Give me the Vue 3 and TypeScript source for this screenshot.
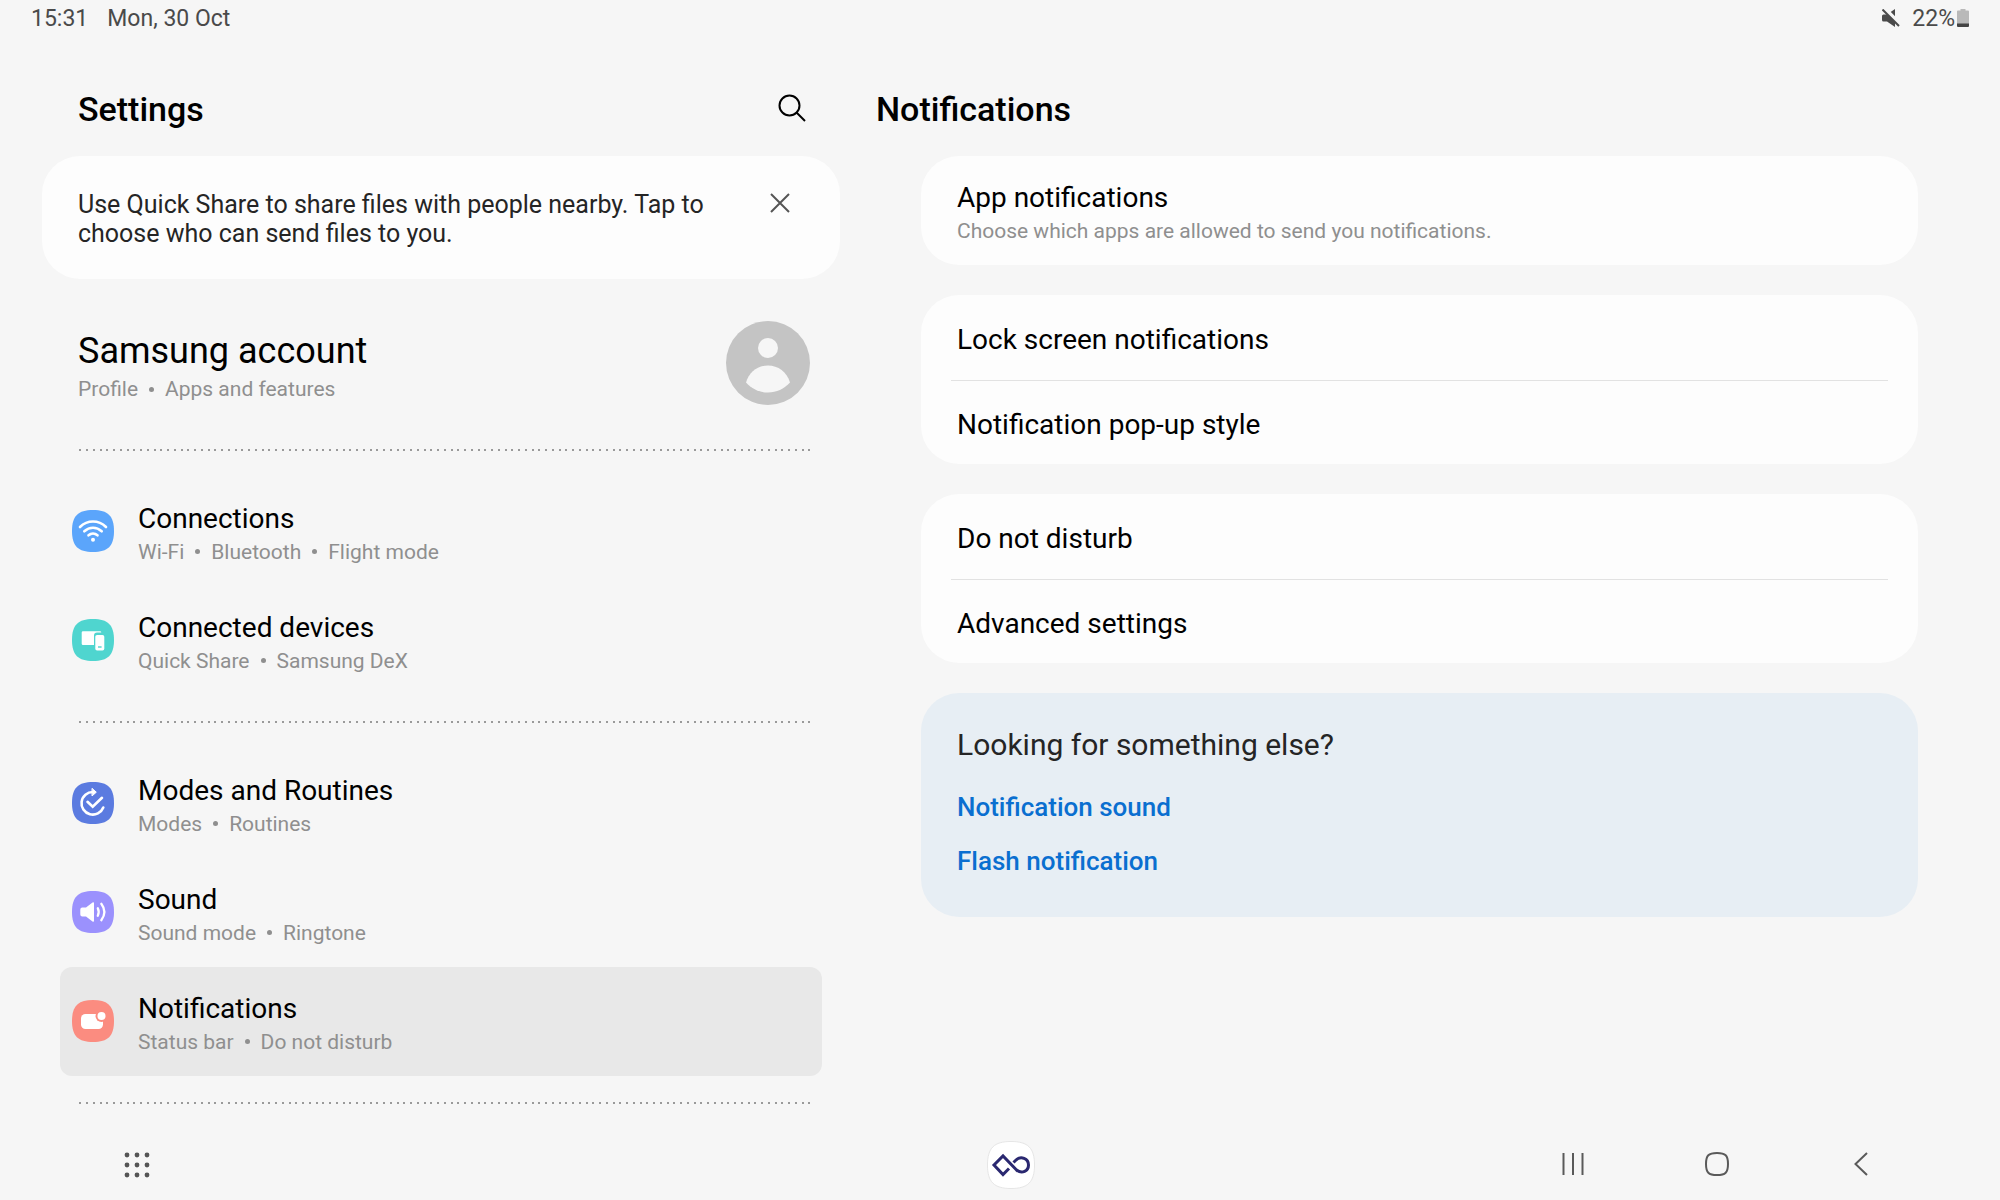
<script setup lang="ts">
interface SettingsItem {
  id: string
  title: string
  parts: string[]
  color: string
}

const groups: SettingsItem[][] = [
  [
    { id: 'connections', title: 'Connections', parts: ['Wi-Fi', 'Bluetooth', 'Flight mode'], color: '#5ba5fb' },
    { id: 'devices', title: 'Connected devices', parts: ['Quick Share', 'Samsung DeX'], color: '#4fd5cf' },
  ],
  [
    { id: 'modes', title: 'Modes and Routines', parts: ['Modes', 'Routines'], color: '#5b7be0' },
    { id: 'sound', title: 'Sound', parts: ['Sound mode', 'Ringtone'], color: '#9b91fd' },
    { id: 'notifications', title: 'Notifications', parts: ['Status bar', 'Do not disturb'], color: '#fb8c80' },
  ],
]

const selected = 'notifications'

const cards: string[][] = [
  ['Lock screen notifications', 'Notification pop-up style'],
  ['Do not disturb', 'Advanced settings'],
]
</script>

<template>
  <div class="screen">
    <header class="status">
      <span>15:31</span>
      <span class="date">Mon, 30 Oct</span>
      <svg class="mute" width="18" height="18" viewBox="0 0 18 18">
        <path d="M0 7q0-1.500 1.500-1.500H5L13 0V18L5 12.500H1.500Q0 12.500 0 11z" fill="#4a4a4a" />
        <path d="M2 -1L18 15" stroke="#f6f6f6" stroke-width="4" />
        <path d="M.5 .5L17 17" stroke="#4a4a4a" stroke-width="2" />
      </svg>
      <span>22%</span>
      <svg class="battery" width="12" height="18" viewBox="0 0 12 18">
        <path d="M3.500 0h5v1.500H11q1 0 1 1V15H0V2.500q0-1 1-1h2.500z" fill="#b9b9b9" />
        <path d="M0 14.500h12V17q0 1-1 1H1q-1 0-1-1z" fill="#444" />
      </svg>
    </header>

    <main class="panes">
      <section class="left">
        <div class="bar">
          <h1>Settings</h1>
          <button class="icon-btn" aria-label="Search">
            <svg width="28" height="28" viewBox="0 0 28 28" fill="none" stroke="#000" stroke-width="2">
              <circle cx="11.500" cy="11.500" r="10" />
              <path d="M18.500 18.500L27 27" />
            </svg>
          </button>
        </div>

        <div class="tip">
          <p>Use Quick Share to share files with people nearby. Tap to choose who can send files to you.</p>
          <button class="icon-btn" aria-label="Dismiss">
            <svg width="20" height="20" viewBox="0 0 20 20" fill="none" stroke="#555" stroke-width="2">
              <path d="M1 1L19 19M19 1L1 19" />
            </svg>
          </button>
        </div>

        <button class="account">
          <span class="text">
            <span class="account-title">Samsung account</span>
            <span class="sub"><span>Profile</span><i /><span>Apps and features</span></span>
          </span>
          <svg width="84" height="84" viewBox="0 0 84 84">
            <circle cx="42" cy="42" r="42" fill="#c4c4c4" />
            <circle cx="42" cy="27" r="10" fill="#f6f6f6" />
            <path d="M20 61.500C23 51 32 44.500 42 44.500S61 51 64 61.500C58 68 50.500 71.500 42 71.500S26 68 20 61.500z" fill="#f6f6f6" />
          </svg>
        </button>

        <template v-for="(group, g) in groups" :key="g">
          <svg class="dots" height="2"><line x1="0" y1="1" x2="100%" y2="1" stroke="#9a9a9a" stroke-width="2" stroke-dasharray="2 5 2 5 2 5 2 4" /></svg>
          <nav class="group">
            <button v-for="item in group" :key="item.id" class="row" :class="{ active: item.id === selected }">
              <svg width="42" height="42" viewBox="0 0 42 42" fill="none">
                <path d="M21 0C36 0 42 6 42 21S36 42 21 42 0 36 0 21 6 0 21 0z" :fill="item.color" />
                <g v-if="item.id === 'connections'" stroke="#fff" stroke-width="2.600" stroke-linecap="round">
                  <path d="M8 17C15.500 9.700 26.500 9.700 34 17" />
                  <path d="M12.300 21.300C17.500 16.500 24.500 16.500 29.700 21.300" />
                  <path d="M16.500 25.300C19.200 22.900 22.800 22.900 25.500 25.300" />
                  <circle cx="21" cy="29.800" r="2" fill="#fff" stroke="none" />
                </g>
                <g v-else-if="item.id === 'devices'" fill="#fff">
                  <path d="M11 12.300h17q1.300 0 1.300 1.300H25q-3 0-3 3V26H11q-1.300 0-1.300-1.300V13.600q0-1.300 1.300-1.300z" />
                  <rect x="23.300" y="16" width="9" height="15.500" rx="1.800" />
                  <rect x="26" y="27.300" width="3.600" height="1.400" :fill="item.color" />
                </g>
                <g v-else-if="item.id === 'modes'" stroke="#fff" stroke-width="2.600" stroke-linecap="round">
                  <path d="M21 10A11.300 11.300 0 1 0 31.300 25.500" />
                  <path d="M15.500 19.800L20.700 24.800L30 15.800" />
                  <path d="M20.300 6.600L24.300 10.200L20.300 13.700z" fill="#fff" stroke-width="1" />
                </g>
                <g v-else-if="item.id === 'sound'">
                  <path d="M8.300 18.500q0-2 2-2H14L20.500 11.500q1.500-1 1.500.8V29.700q0 1.800-1.500.8L14 25.500H10.300q-2 0-2-2z" fill="#fff" />
                  <path d="M25.800 17.300Q27.600 21 25.800 24.700M29.300 12.800Q35.500 21 29.300 29.200" stroke="#fff" stroke-width="2.300" stroke-linecap="round" />
                </g>
                <g v-else fill="#fff">
                  <rect x="9" y="14" width="22" height="15" rx="4.500" />
                  <circle cx="29.500" cy="16" r="6" :fill="item.color" />
                  <circle cx="29.500" cy="16" r="4" />
                </g>
              </svg>
              <span class="text">
                <span class="title">{{ item.title }}</span>
                <span class="sub">
                  <template v-for="(part, p) in item.parts" :key="part"><i v-if="p" /><span>{{ part }}</span></template>
                </span>
              </span>
            </button>
          </nav>
        </template>
        <svg class="dots" height="2"><line x1="0" y1="1" x2="100%" y2="1" stroke="#9a9a9a" stroke-width="2" stroke-dasharray="2 5 2 5 2 5 2 4" /></svg>
      </section>

      <section class="right">
        <div class="bar"><h2>Notifications</h2></div>
        <div class="cards">
          <div class="card">
            <button class="entry described">
              <span class="title">App notifications</span>
              <span class="sub">Choose which apps are allowed to send you notifications.</span>
            </button>
          </div>
          <div v-for="card in cards" :key="card[0]" class="card">
            <button v-for="label in card" :key="label" class="entry"><span class="title">{{ label }}</span></button>
          </div>
          <div class="related">
            <h3>Looking for something else?</h3>
            <a href="#sound">Notification sound</a>
            <a href="#flash">Flash notification</a>
          </div>
        </div>
      </section>
    </main>

    <footer class="taskbar">
      <button class="icon-btn apps" aria-label="Apps">
        <svg width="26" height="26" viewBox="0 0 26 26" fill="#555">
          <template v-for="y in 3" :key="y">
            <circle v-for="x in 3" :key="x" :cx="x * 10 - 7" :cy="y * 10 - 7" r="2.400" />
          </template>
        </svg>
      </button>
      <button class="icon-btn dock" aria-label="Recent app">
        <svg width="48" height="48" viewBox="0 0 48 48" fill="none">
          <path d="M24 .5C41 .5 47.500 7 47.500 24S41 47.500 24 47.500.5 41 .5 24 7 .5 24 .5z" fill="#fff" stroke="#e6e6e6" />
          <path d="M22 27.500L16 33.500L7 24L16 15L29.500 29C35 33.500 41.500 30 41.500 24S34 14 28.500 19.500L26.500 21.500" stroke="#2a2870" stroke-width="3" />
        </svg>
      </button>
      <div class="keys">
        <button class="icon-btn" aria-label="Recents">
          <svg width="24" height="24" viewBox="0 0 24 24" stroke="#5a5a5a" stroke-width="2"><path d="M2.500 1v22M12 1v22M21.500 1v22" /></svg>
        </button>
        <button class="icon-btn" aria-label="Home">
          <svg width="24" height="24" viewBox="0 0 24 24" fill="none" stroke="#5a5a5a" stroke-width="2"><path d="M12 1C20.500 1 23 3.500 23 12S20.500 23 12 23 1 20.500 1 12 3.500 1 12 1z" /></svg>
        </button>
        <button class="icon-btn" aria-label="Back">
          <svg width="24" height="24" viewBox="0 0 24 24" fill="none" stroke="#5a5a5a" stroke-width="2"><path d="M18 1L6.500 12L18 23" /></svg>
        </button>
      </div>
    </footer>
  </div>
</template>

<style>
body {
  background: #f6f6f6;
}
</style>

<style scoped>
.screen {
  box-sizing: border-box;
  min-height: 100vh;
  display: flex;
  flex-direction: column;
  background: #f6f6f6;
  color: #000;
  font-family: Roboto, "Liberation Sans", sans-serif;
}

button {
  margin: 0;
  padding: 0;
  border: 0;
  background: none;
  color: inherit;
  font: inherit;
  text-align: left;
  cursor: pointer;
}

svg {
  display: block;
  flex: none;
}

h1,
h2,
h3,
p {
  margin: 0;
  font-weight: 400;
}

.icon-btn {
  display: flex;
  align-items: center;
  justify-content: center;
}

.status {
  display: flex;
  align-items: center;
  height: 36px;
  padding: 0 31px;
  color: #4a4a4a;
  font-size: 23px;
}

.date {
  margin-left: 19px;
}

.mute {
  margin-left: auto;
  margin-right: 12px;
}

.battery {
  margin-left: 2px;
}

.panes {
  flex: 1;
  display: flex;
}

.left {
  flex: 0 0 42%;
  box-sizing: border-box;
  padding-left: 42px;
}

.right {
  flex: 1;
  padding: 0 82px 0 36px;
}

.bar {
  display: flex;
  align-items: center;
  justify-content: space-between;
  height: 120px;
  padding: 0 34px 0 36px;
}

.bar h1,
.bar h2 {
  padding-top: 26px;
  font-size: 34px;
  line-height: 40px;
  font-weight: 500;
}

.bar .icon-btn {
  padding-top: 24px;
}

.right .bar {
  padding: 0;
}

.tip {
  display: flex;
  align-items: flex-start;
  justify-content: space-between;
  gap: 48px;
  padding: 34px 50px 31px 36px;
  border-radius: 38px;
  background: #fdfdfd;
  color: #252525;
  font-size: 25px;
  line-height: 29px;
}

.tip .icon-btn {
  padding: 3px 0;
}

.account {
  display: flex;
  align-items: center;
  justify-content: space-between;
  width: 100%;
  height: 170px;
  padding: 0 30px 2px 36px;
}

.text {
  display: flex;
  flex-direction: column;
  padding-top: 6px;
}

.account-title {
  font-size: 36px;
  line-height: 46px;
}

.title {
  font-size: 28px;
  line-height: 36px;
}

.sub {
  display: flex;
  align-items: center;
  color: #8f8f8f;
  font-size: 21px;
  line-height: 30px;
}

.sub i {
  width: 5px;
  height: 5px;
  margin: 0 11px;
  border-radius: 50%;
  background: #8f8f8f;
}

.dots {
  width: calc(100% - 67px);
  margin-left: 37px;
}

.group {
  display: flex;
  flex-direction: column;
  padding: 26px 18px;
}

.row {
  display: flex;
  align-items: center;
  gap: 24px;
  height: 109px;
  padding: 0 12px 2px;
  border-radius: 12px;
}

.row.active {
  background: #e8e8e8;
}

.cards {
  display: flex;
  flex-direction: column;
  gap: 30px;
  padding-left: 45px;
}

.card,
.related {
  display: flex;
  flex-direction: column;
  border-radius: 38px;
}

.card {
  padding: 0 30px;
  background: #fdfdfd;
}

.entry {
  display: flex;
  flex-direction: column;
  justify-content: center;
  height: 85px;
  padding: 4px 6px 0;
}

.entry + .entry {
  height: 84px;
  border-top: 1px solid #e2e2e2;
}

.described {
  height: 109px;
}

.related {
  padding: 34px 36px 41px;
  background: #e7eef4;
}

.related h3 {
  margin-bottom: 5px;
  color: #252525;
  font-size: 30px;
  line-height: 36px;
}

.related a {
  align-self: flex-start;
  margin-top: 24px;
  color: #0a6fd0;
  font-size: 26px;
  line-height: 30px;
  font-weight: 500;
  text-decoration: none;
}

.taskbar {
  display: flex;
  align-items: center;
  height: 70px;
  padding: 0 127px 0 124px;
}

.dock {
  margin-left: auto;
}

.keys {
  flex: 0 0 312px;
  display: flex;
  justify-content: space-between;
  margin-left: 526px;
  padding-bottom: 2px;
}
</style>
